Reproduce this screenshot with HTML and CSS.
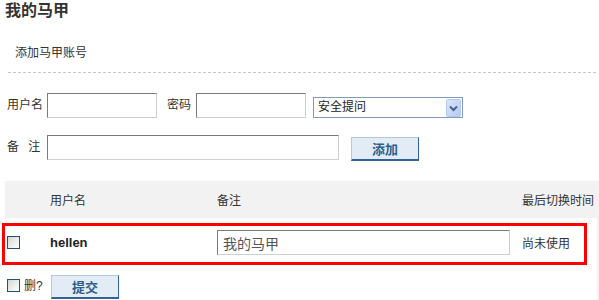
FILE: index.html
```html
<!DOCTYPE html>
<html lang="zh-CN">
<head>
<meta charset="utf-8">
<title>我的马甲</title>
<link rel="stylesheet" href="styles.css">
</head>
<body>
<div class="page">
  <h1 class="title">我的马甲</h1>
  <div class="subtitle">添加马甲账号</div>
  <div class="divider"></div>

  <div class="form-row row1">
    <label class="lbl lbl-first">用户名</label>
    <input class="txt w110" type="text">
    <label class="lbl lbl-pass">密码</label>
    <input class="txt w110" type="password">
    <div class="select">
      <span class="select-text">安全提问</span>
      <span class="select-arrow">
        <svg width="15" height="18" viewBox="0 0 15 18">
          <defs>
            <linearGradient id="ag" x1="0" y1="0" x2="1" y2="1">
              <stop offset="0" stop-color="#dde7fc"/>
              <stop offset="1" stop-color="#b3c8f4"/>
            </linearGradient>
          </defs>
          <rect x="0.5" y="0.5" width="14" height="17" rx="1" fill="url(#ag)" stroke="#b9c9ee"/>
          <path d="M4 7.5 L7.5 11 L11 7.5" fill="none" stroke="#4d6185" stroke-width="2"/>
        </svg>
      </span>
    </div>
  </div>

  <div class="form-row row2">
    <label class="lbl lbl-first lbl-note">备 注</label>
    <input class="txt w292" type="text">
    <button class="btn btn-add" type="button">添加</button>
  </div>

  <div class="list">
    <div class="list-head grid">
      <span></span>
      <span>用户名</span>
      <span>备注</span>
      <span>最后切换时间</span>
    </div>
    <div class="list-row grid">
      <span class="cell-check"><span class="checkbox"></span></span>
      <span class="uname">hellen</span>
      <span><input class="txt w293 note-input" type="text" value="我的马甲"></span>
      <span class="status">尚未使用</span>
    </div>
    <div class="list-foot">
      <span class="checkbox"></span>
      <span class="del">删?</span>
      <button class="btn btn-submit" type="button">提交</button>
    </div>
  </div>
</div>
</body>
</html>
```

FILE: styles.css
```css
* { box-sizing: border-box; }

html, body {
  margin: 0;
  padding: 0;
  background: #fff;
}

body {
  font-family: "Liberation Sans", "Noto Sans CJK SC", sans-serif;
  font-size: 12px;
  color: #333;
  width: 599px;
  height: 300px;
  overflow: hidden;
}

.page {
  display: flex;
  flex-direction: column;
  height: 300px;
}

.title {
  margin: 0;
  padding: 2px 0 0 5px;
  height: 22px;
  font-size: 16px;
  line-height: 18px;
  font-weight: bold;
  color: #333;
}

.subtitle {
  margin-top: 21px;
  padding-left: 15px;
  height: 20px;
  line-height: 20px;
  font-size: 12px;
  color: #333;
}

.divider {
  margin: 9px 3px 0 8px;
  border-top: 1px dashed #c8c8c8;
  height: 0;
}

.form-row {
  display: flex;
  align-items: flex-start;
}

.row1 { margin-top: 20px; }
.row2 { margin-top: 17px; }

.lbl {
  line-height: 25px;
  height: 25px;
  font-size: 12px;
  color: #333;
  white-space: pre;
}

.lbl-first {
  flex: 0 0 47px;
  padding-left: 7px;
}

.lbl-note { word-spacing: 6px; }

.lbl-pass {
  margin-left: 10px;
  margin-right: 5px;
}

.txt {
  height: 25px;
  border: 1px solid;
  border-color: #7a7a7a #cfcfcf #cfcfcf #7a7a7a;
  background: #fff;
  padding: 0 5px;
  margin: 0;
  font-family: "Liberation Sans", "Noto Sans CJK SC", sans-serif;
  outline: none;
}

.w110 { width: 110px; }
.w292 { width: 292px; }
.w293 { width: 293px; }

.select {
  margin-left: 7px;
  margin-top: 4px;
  width: 150px;
  height: 21px;
  border: 1px solid #7f9db9;
  background: #fff;
  display: flex;
  align-items: center;
  justify-content: space-between;
  padding: 0 1px 0 4px;
}

.select-text {
  font-size: 12px;
  line-height: 19px;
  color: #222;
}

.select-arrow {
  display: flex;
  width: 15px;
  height: 18px;
  margin-right: 0;
}

.btn {
  width: 68px;
  height: 24px;
  padding: 0;
  margin: 0;
  border: 1px solid;
  border-color: #b0c9df #2f6395 #2f6395 #b0c9df;
  border-bottom-width: 2px;
  background: #e3ecf5;
  color: #2d5e8e;
  font-family: "Noto Sans CJK SC", sans-serif;
  font-size: 13px;
  font-weight: bold;
  line-height: 20px;
  cursor: pointer;
}

.btn-add {
  margin-left: 12px;
  margin-top: 2px;
}

.list {
  margin-top: 20px;
  flex: 1;
  display: flex;
  flex-direction: column;
  background: linear-gradient(to left, #f3f3f3 2px, transparent 2px);
}

.grid {
  display: grid;
  grid-template-columns: 45px 167px 305px 1fr;
  align-items: center;
}

.list-head {
  margin-left: 5px;
  width: 592px;
  height: 37px;
  background: #f2f2f2;
  font-size: 12px;
  color: #333;
}

.list-row {
  margin-top: 5px;
  margin-left: 2px;
  width: 585px;
  height: 42px;
  border: 3px solid #ff0000;
  padding-bottom: 3px;
}

.cell-check {
  display: flex;
  padding-left: 2px;
}

.checkbox {
  display: block;
  width: 13px;
  height: 13px;
  border: 1px solid #1c5180;
  background: linear-gradient(135deg, #d6d6d0 0%, #f4f4f2 70%, #ffffff 100%);
}

.uname {
  font-family: "Liberation Sans", sans-serif;
  font-size: 13px;
  font-weight: bold;
  color: #222;
}

.note-input {
  display: block;
  font-size: 14px;
  color: #555;
}

.status {
  font-size: 12px;
  color: #333;
}

.list-foot {
  margin-top: 10px;
  display: flex;
  align-items: flex-start;
  padding-left: 7px;
}

.list-foot .checkbox {
  margin-top: 4px;
}

.del {
  width: 31px;
  padding-left: 4px;
  line-height: 22px;
  font-size: 12px;
  color: #333;
}
```
